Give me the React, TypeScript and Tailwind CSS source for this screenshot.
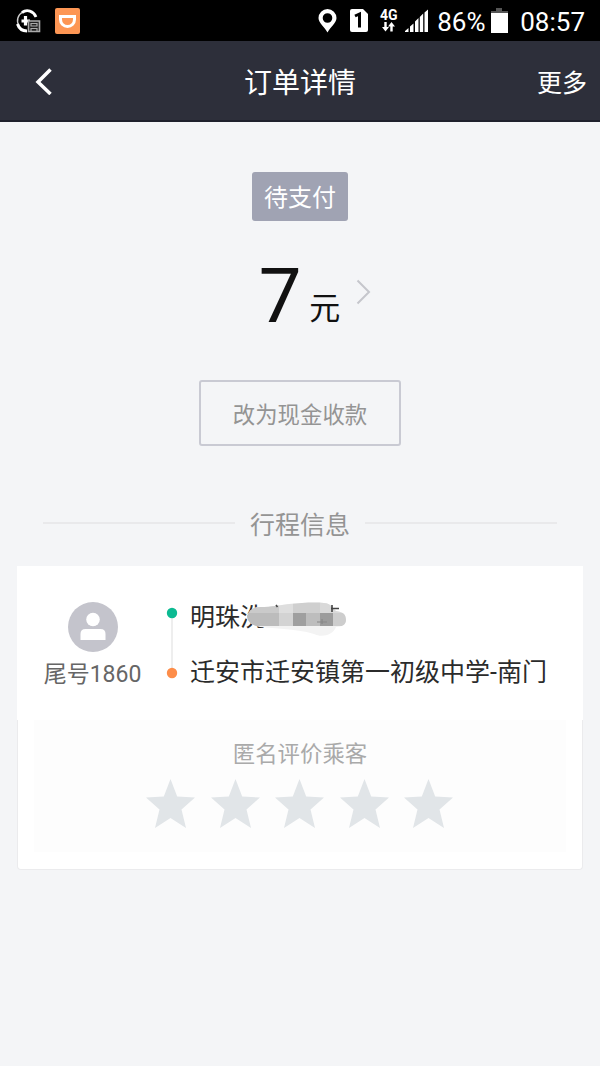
const STARS = [0, 1, 2, 3, 4];

function StatusBar() {
  return (
    <div className="flex h-[41px] items-center bg-black text-white">
      <svg className="ml-[15px]" width="26" height="26" viewBox="0 0 26 26" fill="none">
        <path d="M4 18A10 10 0 0 1 8 3.800" stroke="#ccc" strokeWidth="1.400" />
        <path d="M7 4.500C12 .8 18.500 3 21 9" stroke="#fff" strokeWidth="2.800" />
        <path d="M2.500 16c1.500 4.500 5 7 9.500 7" stroke="#fff" strokeWidth="3" />
        <path d="M6.500 13h8.500M10.500 8v9.500" stroke="#fff" strokeWidth="3.200" />
        <path d="M13.500 13h11v10.500h-11z" fill="#222" stroke="#aaa" strokeWidth="1.600" />
        <path d="M16 15.500h6v2.500h-6zM16 20.500h6v3h-6z" stroke="#aaa" strokeWidth="1.200" />
      </svg>
      <svg className="ml-[14px]" width="25" height="26" viewBox="0 0 25 26" fill="none">
        <rect width="25" height="26" rx="2" fill="#fd9654" />
        <path d="M5.500 8.500h14v3a7 7 0 0 1-14 0V7" stroke="#fff" strokeWidth="3" />
      </svg>

      <svg className="ml-auto" width="19" height="25" viewBox="0 0 19 25">
        <path fillRule="evenodd" fill="#fff" d="M9.500 1a9 9 0 0 1 9 9c0 5-6 9-9 14.500C6.500 19 .5 15 .5 10a9 9 0 0 1 9-9zm0 4.200a4.800 4.800 0 1 0 0 9.600 4.800 4.800 0 0 0 0-9.600z" />
      </svg>
      <svg className="ml-[13px]" width="18" height="23" viewBox="0 0 18 23" fill="none">
        <path d="M2 0h11l5 5v16a2 2 0 0 1-2 2H2a2 2 0 0 1-2-2V2a2 2 0 0 1 2-2z" fill="#fff" />
        <path d="M5 7l4.500-2V18.500" stroke="#000" strokeWidth="3" />
      </svg>
      <div className="ml-[11px] flex w-[19px] flex-col items-center">
        <span className="text-[14px] leading-[13px] font-bold">4G</span>
        <svg width="13" height="10" viewBox="0 0 13 10" fill="#fff">
          <path d="M2.300 0h2.400v5H7L3.500 9.500 0 5h2.300zM8.300 9.500h2.400v-5H13L9.500 0 6 4.500h2.300z" />
        </svg>
      </div>
      <svg className="ml-[7px]" width="23" height="23" viewBox="0 0 23 23" fill="#fff">
        <path d="M0 23v-1l3.500-3v4zM5 23v-5.500l3.500-3V23zM10 23V12.500l3.500-3.500v14zM14.800 23V8l3.400-3.500V23zM19.500 23V3.500L23 .5V23z" />
      </svg>
      <span className="mt-[2px] ml-[9px] w-[49px] text-[26px] leading-none">86%</span>
      <svg className="ml-[5px]" width="17" height="25" viewBox="0 0 17 25">
        <path d="M5 0h6v3h6v3H0V3h5z" fill="#555" />
        <path d="M0 5h17v20H0z" fill="#fff" />
      </svg>
      <span className="mt-[2px] mr-[15px] ml-[12px] text-[26px] leading-none">08:57</span>
    </div>
  );
}

function Header() {
  return (
    <header className="grid h-[81px] grid-cols-3 items-center border-b-2 border-[#1f212d] bg-[#2d2f3a] text-white">
      <svg className="ml-[35px]" width="18" height="28" viewBox="0 0 18 28" fill="none">
        <path d="M15.500 2.500L3 15l12.500 12" stroke="#fff" strokeWidth="3.500" />
      </svg>
      <h1 className="pt-[7px] text-center text-[28px] leading-[40px]">订单详情</h1>
      <span className="pt-[7px] pr-[13px] text-right text-[25px] leading-[36px]">更多</span>
    </header>
  );
}

function Payment() {
  return (
    <section className="flex flex-col items-center pt-[50px]">
      <div className="flex h-[49px] w-[96px] items-center justify-center rounded-[3px] bg-[#a0a3b3] pt-[3px] text-[24px] text-white">
        待支付
      </div>
      <div className="mt-[30px] ml-[30px] flex h-[90px] items-start text-[#111]">
        <span className="text-[76px] leading-[90px]">7</span>
        <span className="mt-[40px] ml-[8px] text-[31px] leading-[36px]">元</span>
        <svg className="mt-[28px] ml-[16px]" width="15" height="26" viewBox="0 0 15 26" fill="none">
          <path d="M1.500 1.500L13 13 1.500 24.500" stroke="#c5c6cc" strokeWidth="2" />
        </svg>
      </div>
      <button className="mt-[39px] h-[66px] w-[202px] rounded-[3px] border-2 border-[#c9cad3] pt-[5px] text-[22.400px] text-[#949494]">
        改为现金收款
      </button>
    </section>
  );
}

// Pixelated smear hiding the rest of the pickup address
function Mosaic() {
  return (
    <svg className="absolute top-[-4px] left-[54px]" width="104" height="46" viewBox="0 0 104 46">
      <defs>
        <clipPath id="smear">
          <path d="M3 20C5 14 9 11 16 11c12 0 19-2 29-3 12-1 25-2 35-1 7 0 9 6 12 8 8 1 10 4 10 9 0 4-3 7-10 7-3 8-14 11-22 7-10-3-20-4-30-5l-24-2C9 30 3 26 3 20z" />
        </clipPath>
      </defs>
      <g clipPath="url(#smear)">
        <path d="M0 0h104v46H0z" fill="#f3f3f3" />
        <path d="M0 4h35v13H0z" fill="#cacaca" />
        <path d="M35 4h14v13H35z" fill="#dedede" />
        <path d="M49 4h27v13H49z" fill="#cfcfcf" />
        <path d="M76 4h28v13H76z" fill="#d9d9d9" />
        <path d="M0 17h35v13H0z" fill="#bcbcbc" />
        <path d="M35 17h14v13H35z" fill="#d3d3d3" />
        <path d="M49 17h13v13H49z" fill="#9f9f9f" />
        <path d="M62 17h14v13H62z" fill="#bdbdbd" />
        <path d="M76 17h13v13H76z" fill="#9c9c9c" />
        <path d="M89 17h15v13H89z" fill="#cdcdcd" />
      </g>
      <path d="M32 9l1.500 2M88 9v7M87 12.500h8" stroke="#444" strokeWidth="1.600" />
      <path d="M73 26h10M78 23v5" stroke="#888" strokeWidth="1.200" />
    </svg>
  );
}

function TripCard() {
  return (
    <section className="mx-[17px] flex flex-col">
      <div className="flex h-[154px] bg-white">
        <div className="ml-[26px] flex w-[99px] shrink-0 flex-col items-center pt-[36px]">
          <svg width="50" height="50" viewBox="0 0 50 50">
            <circle cx="25" cy="25" r="25" fill="#c4c4cc" />
            <circle cx="25" cy="17.500" r="6.800" fill="#fff" />
            <path d="M12.500 38v-6q0-5 5-5h15q5 0 5 5v6z" fill="#fff" />
          </svg>
          <span className="mt-[6px] text-[23px] leading-[34px] whitespace-nowrap text-[#666]">尾号1860</span>
        </div>
        <svg className="mt-[41px] ml-[24px] shrink-0" width="12" height="72" viewBox="0 0 12 72">
          <path d="M6 6v60" stroke="#e8e8e8" strokeWidth="1.500" />
          <circle cx="6" cy="6" r="5.200" fill="#0cba92" />
          <circle cx="6" cy="66" r="5.200" fill="#fd8d49" />
        </svg>
        <div className="ml-[12px] flex flex-col gap-[19px] pt-[34px] text-[25px] leading-[36px] text-[#2b2b2b]">
          <div className="relative">
            明珠洗
            <Mosaic />
          </div>
          <span className="whitespace-nowrap">迁安市迁安镇第一初级中学-南门</span>
        </div>
      </div>
      <div className="h-[150px] rounded-b-[4px] border border-t-0 border-[#ebebed] bg-white px-[16px]">
        <div className="flex h-[132px] flex-col items-center bg-[#fdfdfd] pt-[18px]">
          <span className="text-[22.400px] leading-[32px] text-[#aaa]">匿名评价乘客</span>
          <div className="mt-[9px] mr-px flex gap-[15.500px]">
            {STARS.map((n) => (
              <svg key={n} width="49" height="49" viewBox="0 0 49 49" fill="#e1e5e8">
                <path d="M24.500 0l6.700 17.500L49 18.500 35.500 30.500 40 49 24.500 39 9 49l4.500-18.500L0 18.500l17.800-1z" />
              </svg>
            ))}
          </div>
        </div>
      </div>
    </section>
  );
}

export default function App() {
  return (
    <div className="h-[1066px] w-[600px] overflow-hidden bg-[#f4f5f7] font-[Roboto,'Noto_Sans_CJK_SC',sans-serif]">
      <StatusBar />
      <Header />
      <Payment />
      <div className="mx-[43px] mt-[59px] mb-[25px] flex h-[36px] items-center">
        <div className="h-[2px] flex-1 bg-[#e9e9eb]" />
        <h2 className="mx-[15px] pt-[5px] text-[25px] leading-[36px] text-[#949494]">行程信息</h2>
        <div className="h-[2px] flex-1 bg-[#e9e9eb]" />
      </div>
      <TripCard />
    </div>
  );
}
